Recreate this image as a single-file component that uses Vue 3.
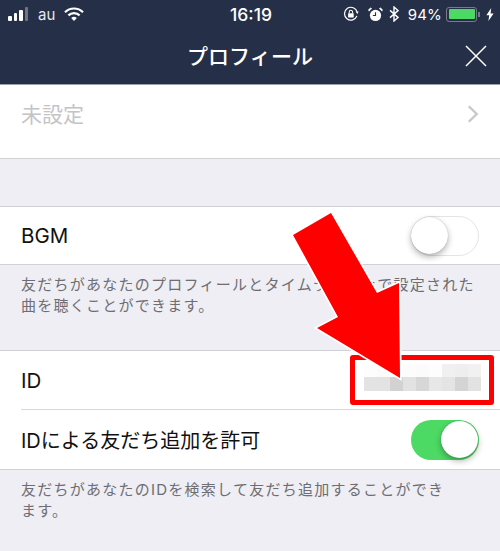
<script setup>
const blocks = [
  '#fdfdfd','#fbfbfb','#fdfdfd','#fcfcfc','#fbfbfb','#fdfdfd','#f0f0f0','#eeeeee','#f1f1f1',
  '#e3e3e3','#e3e3e3','#d2d2d2','#e2e2e2','#d7d7d7','#e7e7e7','#e4e4e4','#d4d4d4','#e2e2e2'
]
</script>

<template>
  <div class="screen">
    <header class="top">
      <div class="status">
        <div class="status-left">
          <div class="signal"><i class="b1"></i><i class="b2"></i><i class="b3"></i><i class="b4"></i></div>
          <span class="carrier">au</span>
          <svg class="wifi" width="20" height="15" viewBox="0 0 20 15">
            <path d="M1 5.2a12.8 12.8 0 0 1 18 0" fill="none" stroke="#fff" stroke-width="2.2"/>
            <path d="M4.4 8.4a8 8 0 0 1 11.2 0" fill="none" stroke="#fff" stroke-width="2.2"/>
            <path d="M7.2 11a4 4 0 0 1 5.6 0L10 14z" fill="#fff"/>
          </svg>
        </div>
        <span class="time">16:19</span>
        <div class="status-right">
          <svg width="16" height="16" viewBox="0 0 17 17">
            <path d="M14.8 10.5A6.8 6.8 0 1 1 15 6.5" fill="none" stroke="#fff" stroke-width="1.3"/>
            <path d="M16.6 5.8l-3 .2 1.7 2.4z" fill="#fff"/>
            <rect x="5.4" y="7.6" width="6" height="4.6" rx=".6" fill="#fff"/>
            <path d="M6.6 7.8V6.4a1.8 1.8 0 0 1 3.6 0v1.4" fill="none" stroke="#fff" stroke-width="1.1"/>
          </svg>
          <svg class="alarm" width="15" height="15" viewBox="0 0 16 16">
            <circle cx="8" cy="9" r="6" fill="#fff"/>
            <path d="M8 5.5V9H5.2" fill="none" stroke="#252f47" stroke-width="1.2"/>
            <path d="M1 4.4 4 1.6 2.6 1 .6 2.8zM15 4.4 12 1.6l1.4-.6 2 1.8z" fill="#fff" stroke="#fff" stroke-width=".6"/>
          </svg>
          <svg class="bt" width="10" height="16" viewBox="0 0 10 16">
            <path d="M1 4.4l8 7L5 15V1l4 3.6-8 7" fill="none" stroke="#fff" stroke-width="1.4"/>
          </svg>
          <span class="pct">94%</span>
          <div class="battery"><div class="level"></div></div>
          <div class="nub"></div>
          <svg class="bolt" width="8" height="13" viewBox="0 0 8 13">
            <path d="M5.2 0 .4 7.2h2.8L2.4 13l5.2-7.6H4.6z" fill="#fff"/>
          </svg>
        </div>
      </div>
      <div class="nav">
        <span class="title">プロフィール</span>
        <svg class="close" width="22" height="22" viewBox="0 0 22 22">
          <path d="M1 1l20 20M21 1 1 21" stroke="#fff" stroke-width="1.5" fill="none"/>
        </svg>
      </div>
    </header>

    <section class="group unset">
      <div class="row-unset">
        <span class="muted">未設定</span>
        <svg width="12" height="18" viewBox="0 0 11 17">
          <path d="M1.5 1.2 9 8.5l-7.5 7.3" fill="none" stroke="#c7c7cc" stroke-width="2.2"/>
        </svg>
      </div>
    </section>

    <div class="spacer"></div>

    <section class="group">
      <div class="row bgm">
        <span class="latin">BGM</span>
        <div class="switch off"><div class="knob"></div></div>
      </div>
    </section>
    <p class="note first">友だちがあなたのプロフィールとタイムライン上で設定された<br>曲を聴くことができます。</p>

    <section class="group">
      <div class="row id-row">
        <span class="latin">ID</span>
        <div class="pixels">
          <i v-for="(c, n) in blocks" :key="n" :style="{ background: c }"></i>
        </div>
      </div>
      <div class="divider"></div>
      <div class="row allow">
        <span>IDによる友だち追加を許可</span>
        <div class="switch on"><div class="knob"></div></div>
      </div>
    </section>
    <p class="note">友だちがあなたのIDを検索して友だち追加することができ<br>ます。</p>

    <div class="highlight"></div>
    <svg class="arrow" width="500" height="551" viewBox="0 0 500 551">
      <polygon class="arrow-shape" points="331,213 293,235 338,317 317,328 400,378 399,283 377,293"/>
    </svg>
  </div>
</template>

<style scoped>
.screen {
  position: relative;
  width: 500px;
  height: 551px;
  overflow: hidden;
  background: #eeeef4;
  font-family: "Inter", "Noto Sans CJK JP", sans-serif;
  color: #111;
}
.top {
  height: 85px;
  box-sizing: border-box;
  background: #252f47;
  border-bottom: 1px solid #9aa0ad;
  color: #fff;
}
.status {
  height: 28px;
  padding: 0 6px 0 8px;
  display: grid;
  grid-template-columns: 1fr auto 1fr;
  align-items: center;
}
.status-left, .status-right { display: flex; align-items: center; }
.status-right { justify-content: flex-end; }
.signal { display: flex; align-items: flex-end; gap: 2px; height: 14px; margin-right: 10px; }
.signal i { width: 3.5px; background: #fff; border-radius: 1px; }
.b1 { height: 5px; }
.b2 { height: 8px; }
.b3 { height: 11px; }
.signal .b4 { height: 14px; background: #6f7585; }
.carrier { font-size: 15px; color: #e8e9ec; margin-right: 9px; }
.time { font-size: 17.5px; font-weight: 500; }
.status-right svg { flex: none; }
.alarm { margin-left: 9px; }
.bt { margin-left: 6px; }
.pct { font-size: 15px; margin-left: 9px; letter-spacing: .2px; }
.battery {
  width: 31px;
  height: 15px;
  margin-left: 4px;
  padding: 1.5px;
  box-sizing: border-box;
  border: 1.5px solid #767b8b;
  border-radius: 3px;
}
.level { width: 100%; height: 100%; background: #4cd964; border-radius: 1px; }
.nub { width: 2px; height: 5px; margin-left: 1px; background: #767b8b; }
.bolt { margin-left: 6px; }
.nav {
  position: relative;
  height: 56px;
  display: flex;
  align-items: center;
  justify-content: center;
}
.title { font-size: 21px; font-weight: 500; letter-spacing: .1px; margin-top: -3px; }
.close { position: absolute; right: 13px; top: 17px; }
.group { background: #fff; border-bottom: 1px solid #d2d2d6; }
.unset { height: 73px; }
.row-unset {
  height: 57px;
  padding: 0 21px;
  display: flex;
  align-items: center;
  justify-content: space-between;
}
.muted { font-size: 21px; color: #c4c4c8; margin-top: -2px; }
.spacer { height: 47px; }
.spacer + .group { border-top: 1px solid #d2d2d6; }
.row {
  padding: 0 21px;
  display: flex;
  align-items: center;
  justify-content: space-between;
  font-size: 20px;
}
.latin { font-size: 20.5px; }
.bgm { height: 57px; }
.id-row { height: 58px; padding-right: 19px; }
.allow { height: 59px; }
.divider { height: 1px; margin-left: 21px; background: #d8d8dc; }
.note {
  margin: 0;
  padding: 9px 0 0 21px;
  font-size: 15px;
  letter-spacing: 1.25px;
  line-height: 21px;
  white-space: nowrap;
  color: #6d6d72;
}
.note.first { height: 85px; box-sizing: border-box; }
.note.first + .group { border-top: 1px solid #d2d2d6; }
.switch {
  position: relative;
  width: 68px;
  height: 40px;
  box-sizing: border-box;
  border-radius: 20px;
}
.switch.off { border: 1.5px solid #e4e4e6; background: #fff; }
.switch.on { background: #4cd964; }
.knob {
  position: absolute;
  width: 37px;
  height: 37px;
  border-radius: 50%;
  background: #fff;
  box-shadow: 0 3px 6px rgba(0, 0, 0, .3), 0 0 1px rgba(0, 0, 0, .3);
}
.off .knob { left: -1px; top: 0; }
.on .knob { right: 1.5px; top: 1.5px; }
.pixels {
  display: grid;
  grid-template-columns: repeat(9, 13px);
  grid-auto-rows: 13.5px;
  margin-bottom: 6px;
}
.pixels i { display: block; }
.highlight {
  position: absolute;
  left: 350px;
  top: 355px;
  width: 144px;
  height: 50px;
  box-sizing: border-box;
  border: 5px solid #fe0000;
  border-radius: 3px;
}
.arrow { position: absolute; left: 0; top: 0; }
.arrow-shape {
  fill: #fe0000;
  stroke: #fff;
  stroke-width: 3.5;
  paint-order: stroke fill;
  stroke-linejoin: miter;
}
</style>
